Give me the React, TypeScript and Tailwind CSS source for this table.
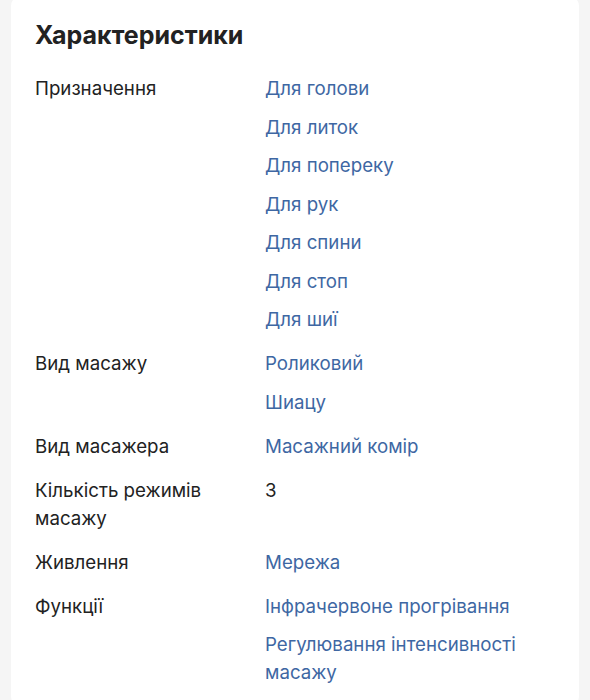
const specs: { label: string; values: string[]; link?: boolean }[] = [
  {
    label: 'Призначення',
    values: ['Для голови', 'Для литок', 'Для попереку', 'Для рук', 'Для спини', 'Для стоп', 'Для шиї'],
  },
  { label: 'Вид масажу', values: ['Роликовий', 'Шиацу'] },
  { label: 'Вид масажера', values: ['Масажний комір'] },
  { label: 'Кількість режимів масажу', values: ['3'], link: false },
  { label: 'Живлення', values: ['Мережа'] },
  { label: 'Функції', values: ['Інфрачервоне прогрівання', 'Регулювання інтенсивності масажу'] },
];

const App = () => {
  return (
    <div className="min-h-[700px] bg-[#f5f5f5] pl-[11px] pr-[11px] font-['Inter',sans-serif]">
      <div className="bg-white rounded-[10px] -mt-[4px] pt-[22px] pb-[20px] pl-[24px] pr-[24px]">
        <h2 className="text-[25px] leading-[34px] font-bold text-[#222222]">Характеристики</h2>
        <dl className="mt-[23px] flex flex-col gap-[16px]">
          {specs.map((row) => (
            <div key={row.label} className="grid grid-cols-[230px_1fr]">
              <dt className="text-[18.7px] leading-[28px] text-[#222222] pr-[20px]">{row.label}</dt>
              <dd className="flex flex-col gap-[10.5px]">
                {row.values.map((v) => (
                  <span
                    key={v}
                    className={
                      row.link === false
                        ? 'text-[18.7px] leading-[28px] text-[#222222]'
                        : 'text-[18.7px] leading-[28px] text-[#3e67a3]'
                    }
                  >
                    {v}
                  </span>
                ))}
              </dd>
            </div>
          ))}
        </dl>
      </div>
    </div>
  );
};

export default App;
